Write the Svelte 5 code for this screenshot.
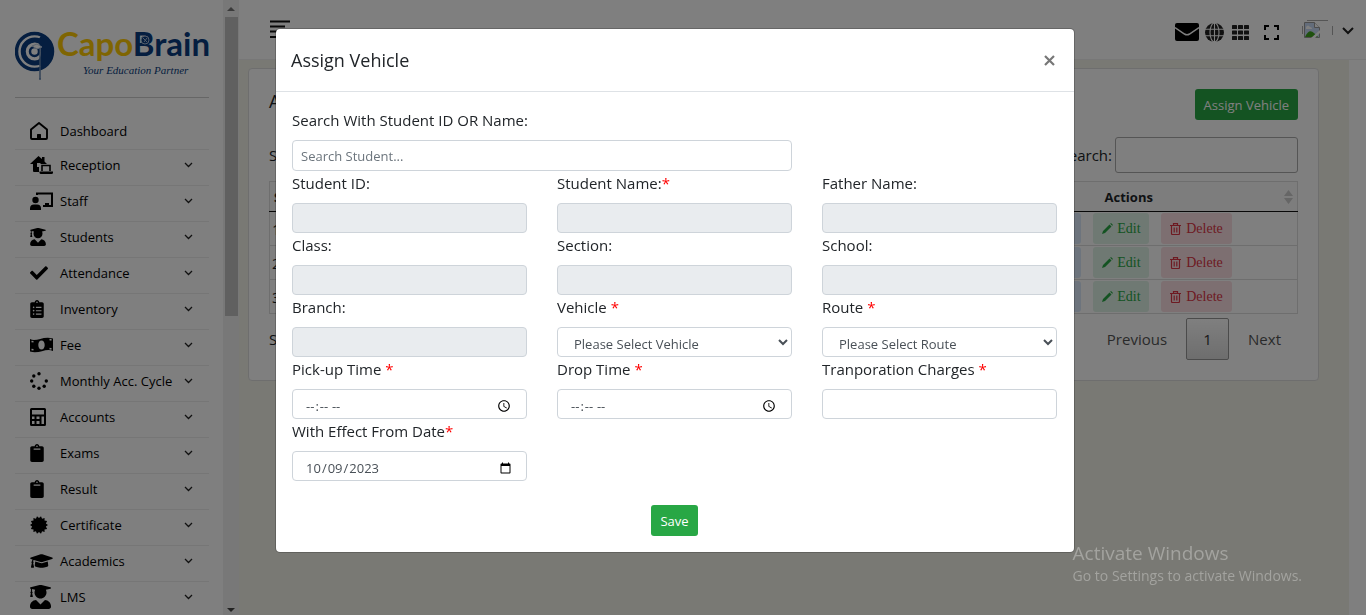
<script>
  const clipboard = 'M384 112v352c0 26.51-21.49 48-48 48H48c-26.51 0-48-21.49-48-48V112c0-26.51 21.49-48 48-48h80c0-35.29 28.71-64 64-64s64 28.71 64 64h80c26.51 0 48 21.49 48 48zM192 40c-13.255 0-24 10.745-24 24s10.745 24 24 24 24-10.745 24-24-10.745-24-24-24m96 114v-20a6 6 0 0 0-6-6H102a6 6 0 0 0-6 6v20a6 6 0 0 0 6 6h180a6 6 0 0 0 6-6z';
  const graduate = 'M319.4 320.6L224 416l-95.4-95.4C57.1 323.7 0 382.2 0 454.4v9.6c0 26.5 21.5 48 48 48h352c26.5 0 48-21.5 48-48v-9.6c0-72.2-57.1-130.7-128.6-133.8zM13.6 79.8l6.4 1.5v58.4c-7 4.2-12 11.5-12 20.3 0 8.4 4.6 15.4 11.1 19.7L3.5 242c-1.7 6.9 2.1 14 7.6 14h41.8c5.5 0 9.3-7.1 7.6-14l-15.6-62.3C51.4 175.4 56 168.4 56 160c0-8.8-5-16.1-12-20.3V87.1l66 15.9c-8.6 17.2-14 36.4-14 57 0 70.7 57.3 128 128 128s128-57.3 128-128c0-20.6-5.3-39.8-14-57l96.3-23.2c18.2-4.4 18.2-27.1 0-31.5l-190.4-46c-13-3.1-26.7-3.1-39.7 0L13.6 48.2c-18.1 4.4-18.1 27.2 0 31.6z';

  // Teeth of the certificate seal
  const seal = Array.from({ length: 28 }, (_, i) => {
    const a = (i * Math.PI) / 14;
    const r = i % 2 ? 200 : 256;
    return `${(256 + r * Math.cos(a)).toFixed(0)},${(256 + r * Math.sin(a)).toFixed(0)}`;
  }).join(' ');

  const nav = [
    { label: 'Dashboard', w: 18, box: '0 0 18 18', kind: 'house', leaf: true },
    { label: 'Reception', w: 23, box: '0 0 23 18', kind: 'office' },
    { label: 'Staff', w: 23, box: '0 0 23 18', kind: 'staff' },
    { label: 'Students', w: 16, box: '0 0 448 512', d: graduate },
    { label: 'Attendance', w: 18, box: '0 0 512 512', d: 'M173.898 439.404l-166.4-166.4c-9.997-9.997-9.997-26.206 0-36.204l36.203-36.204c9.997-9.998 26.207-9.998 36.204 0L192 312.69 432.095 72.596c9.997-9.997 26.207-9.997 36.204 0l36.203 36.204c9.997 9.997 9.997 26.206 0 36.204l-294.4 294.401c-9.998 9.997-26.207 9.997-36.204-.001z' },
    { label: 'Inventory', w: 14, box: '0 0 384 512', d: 'M336 64h-80c0-35.3-28.7-64-64-64s-64 28.7-64 64H48C21.5 64 0 85.5 0 112v352c0 26.5 21.5 48 48 48h288c26.5 0 48-21.5 48-48V112c0-26.5-21.5-48-48-48zM96 424c-13.3 0-24-10.7-24-24s10.7-24 24-24 24 10.7 24 24-10.7 24-24 24zm0-96c-13.3 0-24-10.7-24-24s10.7-24 24-24 24 10.7 24 24-10.7 24-24 24zm0-96c-13.3 0-24-10.7-24-24s10.7-24 24-24 24 10.7 24 24-10.7 24-24 24zm96-192c13.3 0 24 10.7 24 24s-10.7 24-24 24-24-10.7-24-24 10.7-24 24-24zm128 368c0 4.4-3.6 8-8 8H168c-4.4 0-8-3.6-8-8v-16c0-4.4 3.6-8 8-8h144c4.4 0 8 3.6 8 8v16zm0-96c0 4.4-3.6 8-8 8H168c-4.4 0-8-3.6-8-8v-16c0-4.4 3.6-8 8-8h144c4.4 0 8 3.6 8 8v16zm0-96c0 4.4-3.6 8-8 8H168c-4.4 0-8-3.6-8-8v-16c0-4.4 3.6-8 8-8h144c4.4 0 8 3.6 8 8v16z' },
    { label: 'Fee', w: 23, box: '0 0 23 18', kind: 'money' },
    { label: 'Monthly Acc. Cycle', w: 18, box: '0 0 18 18', kind: 'dots' },
    { label: 'Accounts', w: 16, box: '0 0 16 18', kind: 'calc' },
    { label: 'Exams', w: 14, box: '0 0 384 512', d: clipboard },
    { label: 'Result', w: 14, box: '0 0 384 512', d: clipboard },
    { label: 'Certificate', w: 18, box: '0 0 512 512', kind: 'seal' },
    { label: 'Academics', w: 23, box: '0 0 640 512', d: 'M622.34 153.2L343.4 67.5c-15.2-4.67-31.6-4.67-46.79 0L17.66 153.2c-23.54 7.23-23.54 38.36 0 45.59l48.63 14.94c-10.67 13.19-17.23 29.28-17.88 46.9C38.78 266.15 32 276.11 32 288c0 10.78 5.68 19.85 13.86 25.65L20.33 428.53C18.11 438.52 25.71 448 35.94 448h56.11c10.24 0 17.84-9.48 15.62-19.47L82.14 313.65C90.32 307.85 96 298.78 96 288c0-11.57-6.47-21.25-15.66-26.87.76-15.02 8.44-28.3 20.69-36.72L296.6 284.5c9.06 2.78 26.44 6.25 46.79 0l278.95-85.7c23.55-7.24 23.55-38.36 0-45.6zM352.79 315.09c-28.53 8.76-52.84 3.92-65.59 0l-145.02-44.55L128 384c0 35.35 85.96 64 192 64s192-28.65 192-64l-14.18-113.47-145.03 44.56z' },
    { label: 'LMS', w: 21, h: 24, box: '0 0 448 512', d: graduate }
  ];

  const rows = [1, 2, 3];

  const fields = [
    { id: 'sid', label: 'Student ID:', type: 'readonly' },
    { id: 'sname', label: 'Student Name:', star: true, type: 'readonly' },
    { id: 'fname', label: 'Father Name:', type: 'readonly' },
    { id: 'class', label: 'Class:', type: 'readonly' },
    { id: 'section', label: 'Section:', type: 'readonly' },
    { id: 'school', label: 'School:', type: 'readonly' },
    { id: 'branch', label: 'Branch:', type: 'readonly' },
    { id: 'vehicle', label: 'Vehicle ', star: true, type: 'select', option: 'Please Select Vehicle' },
    { id: 'route', label: 'Route ', star: true, type: 'select', option: 'Please Select Route' },
    { id: 'pickup', label: 'Pick-up Time ', star: true, type: 'time' },
    { id: 'drop', label: 'Drop Time ', star: true, type: 'time' },
    { id: 'charges', label: 'Tranporation Charges ', star: true, type: 'text' },
    { id: 'effect', label: 'With Effect From Date', star: true, type: 'date' }
  ];
</script>

<div class="page">
  <aside>
    <div class="side">
      <a class="logo" href="#home">
        <svg width="194" height="56" viewBox="0 0 194 56">
          <circle cx="19.500" cy="22.500" r="18" fill="none" stroke="#0a3d80" stroke-width="3.500" />
          <path d="M27 5a19.500 19.500 0 0 1 0 35l-5-8q4-2 4-9.500T22 13z" fill="#0a3d80" />
          <path d="M28 14.500a11.500 11.500 0 1 0 0 16" fill="none" stroke="#0a3d80" stroke-width="5" />
          <circle cx="19.500" cy="22.500" r="4.500" fill="#fff" stroke="#0a3d80" stroke-width="2.500" />
          <path d="M17 17l5-2 5 3-5 2z" fill="#fff" stroke="#b9c8dc" />
          <path d="M25 19v31" stroke="#6585ad" stroke-width="1.500" />
          <circle cx="25" cy="50" r="1" fill="#6585ad" />
          <text x="42" y="27" class="word"><tspan fill="#ffcb05">Capo</tspan><tspan fill="#0a3d80">Brain</tspan></text>
          <circle cx="130" cy="11" r="4" fill="#0a3d80" stroke="#a8bad2" stroke-width="1" />
          <path d="M128 9l4 4M132 9l-3 4" stroke="#a8bad2" stroke-width="1" />
          <text x="68" y="45" class="tag">Your Education Partner</text>
        </svg>
      </a>
      <nav>
        {#each nav as n}
          <a href="#{n.label}">
            <span class="ico">
              <svg width={n.w} height={n.h ?? 18} viewBox={n.box}>
                {#if n.d}
                  <path d={n.d} />
                {:else if n.kind === 'house'}
                  <path d="M1 7.500L9 1l8 6.500V16a1 1 0 0 1-1 1H2a1 1 0 0 1-1-1z" fill="none" stroke="#000" stroke-width="1.900" stroke-linejoin="round" />
                  <path d="M7 17v-4.500a.5.5 0 0 1 .5-.5h3a.5.5 0 0 1 .5.5V17z" />
                {:else if n.kind === 'office'}
                  <path d="M0 8L8.500 0 12 3V1h2.500v4.500L17 8h-6.500v-1H7v4h2v5H4a1 1 0 0 1-1-1V8z" />
                  <path d="M12 15V9.500h8V15" fill="none" stroke="#000" stroke-width="1.600" />
                  <path d="M9.500 15.500H23v1a1.500 1.500 0 0 1-1.500 1.500H11a1.500 1.500 0 0 1-1.500-1.500z" />
                {:else if n.kind === 'staff'}
                  <path d="M7 3V1.500h15V14h-9" fill="none" stroke="#000" stroke-width="2" />
                  <path d="M15 11h4v3h-4z" />
                  <circle cx="5.500" cy="8" r="3.200" />
                  <path d="M0 18v-1.500a4 4 0 0 1 4-4h3a4 4 0 0 1 4 4V18z" />
                {:else if n.kind === 'money'}
                  <path fill-rule="evenodd" d="M0 3c6 3.500 13-3.500 23-.500V15c-7-3.500-14 3.500-23 .5zM11.500 4.500c-2 0-3.200 2-3.200 4.500s1.200 4.500 3.200 4.500 3.200-2 3.200-4.500-1.200-4.500-3.200-4.500z" />
                  <path d="M1.500 5.500l2 .2M1.500 13.500l2 .2M19.500 3.500l2 .4M19.500 12.500l2 .6" stroke="#fff" stroke-width="1.600" />
                {:else if n.kind === 'dots'}
                  {#each [[9, 1.7], [14.2, 4], [16.300, 9], [14.200, 14.200], [9, 16.300], [3.800, 14.200], [1.700, 9], [3.800, 4]] as [x, y], i}
                    {#if i !== 1}<circle cx={x} cy={y} r="1.700" />{/if}
                  {/each}
                {:else if n.kind === 'calc'}
                  <path fill-rule="evenodd" d="M1.500 0h13A1.500 1.500 0 0 1 16 1.500v15a1.500 1.500 0 0 1-1.500 1.500h-13A1.500 1.500 0 0 1 0 16.500v-15A1.500 1.500 0 0 1 1.500 0zM2 2v4.500h12V2zM2 8.500V11h2.500V8.500zM6.500 8.500V11H9.500V8.500zM2 13v3h2.500v-3zM6.500 13v3h3v-3zM11.500 8.500V16H14V8.500z" />
                {:else}
                  <polygon points={seal} />
                {/if}
              </svg>
            </span>
            <span class="name">{n.label}</span>
            {#if !n.leaf}
              <svg class="chev" width="9" height="6" viewBox="0 0 9 6"><path d="M1 1l3.500 3.500L8 1" fill="none" stroke="#222" stroke-width="1.300" /></svg>
            {/if}
          </a>
        {/each}
      </nav>
    </div>
    <div class="bar" aria-hidden="true">
      <svg width="8" height="4" viewBox="0 0 8 4"><path d="M0 4l4-4 4 4z" fill="#777" /></svg>
      <span class="thumb"></span>
      <svg width="8" height="4" viewBox="0 0 8 4"><path d="M0 0l4 4 4-4z" fill="#444" /></svg>
    </div>
  </aside>

  <div class="right">
    <header>
      <button class="plain menu" aria-label="Menu">
        <svg width="20" height="18" viewBox="0 0 20 18"><path d="M0 1.500h20M0 6.500h15M0 11.500h20M0 17h15" stroke="#111" stroke-width="2" /></svg>
      </button>
      <div class="tools">
        <button class="plain" aria-label="Messages">
          <svg width="24" height="18" viewBox="0 0 24 18"><rect width="24" height="18" rx="2" /><path d="M0 4.500l9.500 6.500q2.500 1.500 5 0L24 4.500" fill="none" stroke="#fff" stroke-width="1.500" /></svg>
        </button>
        <button class="plain globe" aria-label="Language">
          <svg width="19" height="19" viewBox="0 0 19 19"><circle cx="9.500" cy="9.500" r="9.500" fill="#222" /><g fill="none" stroke="#fff" stroke-width="1.100"><ellipse cx="9.500" cy="9.500" rx="4.500" ry="9.500" /><path d="M0 6.200h19M0 12.800h19M9.500 0v19" /></g></svg>
        </button>
        <button class="plain grid" aria-label="Apps">
          <svg width="17" height="15" viewBox="0 0 17 15">{#each [0, 5.500, 11] as y}{#each [0, 6, 12] as x}<rect {x} {y} width="5" height="4" rx=".6" fill="#222" />{/each}{/each}</svg>
        </button>
        <button class="plain full" aria-label="Full screen">
          <svg width="15" height="15" viewBox="0 0 15 15"><path d="M1 5V1h4M10 1h4v4M14 10v4h-4M5 14H1v-4" fill="none" stroke="#000" stroke-width="2" /></svg>
        </button>
        <button class="plain user" aria-label="Account">
          <svg width="31" height="30" viewBox="0 0 31 30">
            <path d="M5 .5h21M.5 6v8M30.500 6v9" stroke="#aaa" fill="none" />
            <path d="M2.500 2.500h10l5 5v10h-15z" fill="#c6d8f5" stroke="#999" />
            <path d="M4 7q2-3 4 0 2 0 2 2H4z" fill="#fff" />
            <path d="M3 17q4-9 9-4l4 4z" fill="#3fa31f" />
            <path d="M9 18L18 10v3l-5 5z" fill="#fff" />
            <path d="M12.500 2.500v5h5" fill="#fff" stroke="#999" />
          </svg>
          <svg width="12" height="8" viewBox="0 0 12 8"><path d="M1 1l5 5 5-5" fill="none" stroke="#222" stroke-width="2" /></svg>
        </button>
      </div>
    </header>
    <main>
      <section class="card">
        <div class="top">
          <h2>Assign Vehicle</h2>
          <button class="green">Assign Vehicle</button>
        </div>
        <div class="filter">
          <span>Show</span>
          <label>Search:<input type="search" /></label>
        </div>
        <table>
          <thead>
            <tr>
              <th class="num">S</th><th></th>
              <th class="acts"><div><span>Actions</span>
                <svg width="9" height="14" viewBox="0 0 9 14"><path d="M0 6l4.500-6L9 6zM0 8l4.500 6L9 8z" fill="#ccc" /></svg></div></th>
            </tr>
          </thead>
          <tbody>
            {#each rows as r}
              <tr>
                <td>{r}</td><td></td>
                <td>
                  <div class="btns">
                    <button class="view" aria-label="View"></button>
                    <button class="edit"><svg width="11" height="11" viewBox="0 0 11 11"><path d="M0 11l1-3L7.500 1.500l2 2L3 10zM8.200.8L9 0l2 2-.8.8z" fill="#28a745" /></svg>Edit</button>
                    <button class="del"><svg width="11" height="12" viewBox="0 0 11 12"><path d="M0 2.500h11M3.500 2V.6h4V2M1.500 3v7.500q0 1 1 1h6q1 0 1-1V3M4.200 4.500v5M6.800 4.500v5" fill="none" stroke="#dc3545" stroke-width="1.200" /></svg>Delete</button>
                  </div>
                </td>
              </tr>
            {/each}
          </tbody>
        </table>
        <div class="foot">
          <span>Showing</span>
          <div class="pager"><button class="plain">Previous</button><button class="cur">1</button><button class="plain">Next</button></div>
        </div>
      </section>
    </main>
  </div>
</div>

<div class="backdrop">
  <div class="modal" role="dialog" aria-modal="true" aria-labelledby="title">
    <div class="head">
      <h1 id="title">Assign Vehicle</h1>
      <button class="plain close" aria-label="Close">
        <svg width="11" height="11" viewBox="0 0 11 11"><path d="M1 1l9 9M10 1l-9 9" stroke="#777" stroke-width="2.200" /></svg>
      </button>
    </div>
    <form>
      <div class="field wide">
        <label for="q">Search With Student ID OR Name:</label>
        <input id="q" class="search" type="text" placeholder="Search Student..." />
      </div>
      {#each fields as f}
        <div class="field">
          <label for={f.id}>{f.label}{#if f.star}<span class="star">*</span>{/if}</label>
          {#if f.type === 'readonly'}
            <input id={f.id} type="text" readonly />
          {:else if f.type === 'select'}
            <select id={f.id}><option>{f.option}</option></select>
          {:else if f.type === 'date'}
            <input id={f.id} type="date" value="2023-10-09" />
          {:else}
            <input id={f.id} type={f.type} />
          {/if}
        </div>
      {/each}
      <div class="submit"><button type="button" class="green">Save</button></div>
    </form>
  </div>
</div>

<div class="mark"><strong>Activate Windows</strong><span>Go to Settings to activate Windows.</span></div>

<style>
  :global(body) { margin: 0; overflow: hidden; }
  * { box-sizing: border-box; }
  .page, .backdrop, .mark { font-family: "Open Sans", "Noto Sans", sans-serif; font-size: 15px; line-height: 24px; color: #212529; }
  button, input, select { font: inherit; color: inherit; }
  svg { display: block; flex: none; }
  .plain { border: 0; background: none; padding: 0; }

  .page { display: flex; height: 100vh; overflow: hidden; background: #fff; }
  aside { display: flex; flex: none; width: 239px; background: #fff; }
  .side { flex: 1; padding: 29px 14px 0 15px; overflow: hidden; }
  .logo { display: block; height: 69px; border-bottom: 1px solid #ccc; margin-bottom: 16px; }
  .word { font-family: Lato, sans-serif; font-size: 33px; font-weight: 700; }
  .tag { font-family: "Liberation Serif", serif; font-style: italic; font-size: 11px; fill: #0a3d80; }
  nav a { display: flex; align-items: center; height: 36px; border-bottom: 1px solid #ececec; padding: 0 16px 2px 15px; color: #000; font-size: 13px; text-decoration: none; }
  nav a + a { padding-bottom: 6px; }
  .ico { width: 30px; flex: none; }
  .name { white-space: nowrap; }
  .chev { margin-left: auto; }
  .bar { width: 16px; display: flex; flex-direction: column; align-items: center; padding: 7px 0 3px; gap: 6px; background: #f1f1f1; }
  .thumb { width: 13px; height: 299px; background: #c1c1c1; margin-bottom: auto; }

  .right { flex: 1; min-width: 0; display: flex; flex-direction: column; }
  header { display: flex; justify-content: space-between; height: 60px; flex: none; padding: 20px 12px 0 31px; border-bottom: 1px solid #eee; }
  .menu { align-self: flex-start; }
  .tools { display: flex; align-items: center; height: 24px; }
  .globe { margin-left: 6px; }
  .grid { margin-left: 8px; }
  .full { margin-left: 15px; }
  .user { margin-left: 23px; height: 24px; display: flex; align-items: flex-start; }
  .user svg + svg { margin: 7px 0 0 9px; }
  main { flex: 1; margin-right: 17px; padding: 8px 30px 0 9px; background: #f2f2e8; }
  .card { background: #fff; border: 1px solid #ddd; border-radius: 4px; padding: 20px; }
  .top { display: flex; justify-content: space-between; }
  h2 { margin: 0; font-size: 18px; font-weight: 400; }
  .green { height: 31px; padding: 0 9px; border: 0; border-radius: 3px; background: #28a745; color: #fff; font-size: 13px; white-space: nowrap; }
  .filter { display: flex; justify-content: space-between; align-items: center; margin: 17px 0 8px; }
  .filter label { display: flex; align-items: center; gap: 3px; }
  .filter input { width: 183px; height: 36px; border: 1px solid #aaa; border-radius: 3px; background: #fff; }
  table { width: 100%; border-collapse: collapse; border: 1px solid #ddd; table-layout: fixed; }
  th { height: 30px; padding: 0 4px; border-bottom: 1px solid #111; background: #fafafa; font-size: 13px; text-align: left; }
  .num { width: 60px; }
  .acts { width: 337px; }
  .acts div { display: flex; align-items: center; }
  .acts span { flex: 1; text-align: center; padding-left: 9px; }
  td { height: 34px; padding: 0 2px; border-bottom: 1px solid #ddd; }
  .btns { display: flex; justify-content: center; gap: 12px; }
  .btns button { height: 31px; border: 0; border-radius: 3px; padding: 0 9px; font-family: "Liberation Serif", serif; font-size: 14px; display: flex; align-items: center; gap: 4px; }
  .btns .view { width: 56px; background: #dbe9fb; }
  .btns .edit { background: #dff2e6; color: #28a745; width: 56px; }
  .btns .del { background: #fadfe3; color: #dc3545; gap: 5px; width: 71px; }
  .foot { display: flex; justify-content: space-between; align-items: center; margin-top: 4px; }
  .pager { display: flex; align-items: center; gap: 19px; padding-right: 17px; }
  .pager .plain { color: #555; }
  .cur { width: 43px; height: 42px; border: 1px solid #979797; border-radius: 2px; background: linear-gradient(#fff, #dcdcdc); color: #333; }

  .backdrop { position: fixed; inset: 0; display: flex; justify-content: center; align-items: flex-start; padding: 28px 16px 0 0; background: rgba(0, 0, 0, .5); }
  .modal { width: 100%; max-width: 800px; background: #fff; background-clip: padding-box; border: 1px solid rgba(0, 0, 0, .2); border-radius: 5px; }
  .head { display: flex; justify-content: space-between; align-items: center; height: 63px; padding: 0 19px 0 15px; border-bottom: 1px solid #dee2e6; }
  h1 { margin: 0; font-size: 18px; line-height: 30px; font-weight: 400; }
  form { display: grid; grid-template-columns: repeat(3, 1fr); column-gap: 30px; padding: 16px 17px 16px 16px; }
  .field { display: flex; flex-direction: column; min-width: 0; }
  .wide { grid-column: 1 / 3; }
  .wide + .field { grid-column: 1; }
  .field label { margin-bottom: 8px; }
  .star { color: #f00; }
  .field input, .field select { width: 100%; height: 30px; padding: 4px 12px 0; border: 1px solid #ced4da; border-radius: 4px; background: #fff; color: #495057; font-size: 13px; }
  .field input[readonly] { background: #e9ecef; }
  .field .search { height: 31px; padding: 0 8px; }
  .search::placeholder { color: #6c757d; }
  .submit { grid-column: 1 / 4; display: flex; justify-content: center; margin-top: 24px; }

  .mark { position: fixed; right: 64px; bottom: 28px; display: flex; flex-direction: column; color: #a3a39f; font-size: 14px; line-height: 22px; pointer-events: none; }
  .mark strong { font-size: 19px; line-height: 24px; font-weight: 400; }
</style>
